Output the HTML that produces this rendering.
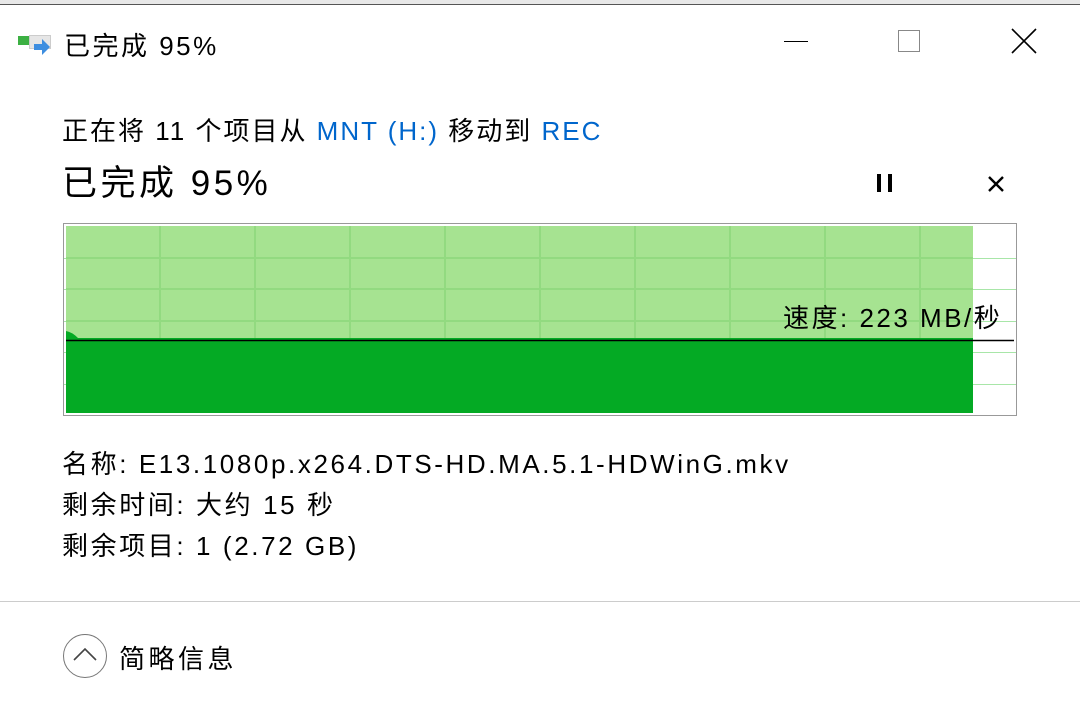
<!DOCTYPE html>
<html><head><meta charset="utf-8"><style>
body{margin:0;width:1080px;height:705px;background:#fff;position:relative;overflow:hidden;font-family:"Liberation Sans","Noto Sans CJK SC",sans-serif;color:#000}
.a{position:absolute;white-space:nowrap}
.blue{color:#0066cc}
</style></head><body>
<div class="a" style="left:0;top:0;width:1080px;height:4px;background:#e8e8e8;border-bottom:1px solid #555"></div>
<div class="a" style="left:18px;top:36px;width:11px;height:9px;background:#3cb043"></div>
<div class="a" style="left:29px;top:35px;width:20px;height:12px;background:#e6e6e6;border:1px solid #ccc"></div>
<svg class="a" style="left:34px;top:38px" width="18" height="20"><path d="M0 6h8V1l8 8-8 8v-5H0z" fill="#3d8ee0"/></svg>
<div class="a" style="left:64px;top:26px;font-size:26px;letter-spacing:2.5px">已完成 95%</div>
<div class="a" style="left:784px;top:41px;width:24px;height:1px;background:#000"></div>
<div class="a" style="left:898px;top:30px;width:20px;height:20px;border:1px solid #888"></div>
<svg class="a" style="left:1011px;top:28px" width="26" height="26"><path d="M1 1L25 25M25 1L1 25" stroke="#000" stroke-width="1.6"/></svg>
<div class="a" style="left:62px;top:111px;font-size:26px;letter-spacing:2px">正在将 11 个项目从 <span class="blue">MNT (H:)</span> 移动到 <span class="blue">REC</span></div>
<div class="a" style="left:62px;top:155px;font-size:35px;letter-spacing:3.5px">已完成 95%</div>
<div class="a" style="left:877px;top:174px;width:4px;height:18px;background:#000"></div>
<div class="a" style="left:888px;top:174px;width:4px;height:18px;background:#000"></div>
<svg class="a" style="left:987px;top:175px" width="18" height="18"><path d="M2 2L16 16M16 2L2 16" stroke="#000" stroke-width="2.4"/></svg>
<div class="a" style="left:63px;top:223px;width:952px;height:191px;border:1px solid #999;background:#fff"></div>
<svg class="a" style="left:64px;top:224px" width="952" height="191">
<g stroke="#a8e6a8" stroke-width="1">
<line x1="0" y1="34.5" x2="952" y2="34.5"/><line x1="0" y1="65.5" x2="952" y2="65.5"/><line x1="0" y1="97.5" x2="952" y2="97.5"/><line x1="0" y1="128.5" x2="952" y2="128.5"/><line x1="0" y1="160.5" x2="952" y2="160.5"/>
</g>
<rect x="2" y="2" width="907" height="187" fill="#a6e391"/>
<g stroke="#92da80" stroke-width="2">
<line x1="2" y1="34" x2="909" y2="34"/><line x1="2" y1="65" x2="909" y2="65"/><line x1="2" y1="97" x2="909" y2="97"/>
<line x1="96" y1="2" x2="96" y2="116"/><line x1="191" y1="2" x2="191" y2="116"/><line x1="286" y1="2" x2="286" y2="116"/><line x1="381" y1="2" x2="381" y2="116"/><line x1="476" y1="2" x2="476" y2="116"/><line x1="571" y1="2" x2="571" y2="116"/><line x1="666" y1="2" x2="666" y2="116"/><line x1="761" y1="2" x2="761" y2="116"/><line x1="856" y1="2" x2="856" y2="116"/>
</g>
<path d="M2 107Q8 108 14 114L909 114V189H2Z" fill="#04aa24"/>
<line x1="2" y1="116.5" x2="950" y2="116.5" stroke="#000" stroke-width="1.5"/>
</svg>
<div class="a" style="left:783px;top:298px;font-size:26px;letter-spacing:2.5px">速度: 223 MB/秒</div>
<div class="a" style="left:62px;top:444px;font-size:26px;letter-spacing:2.6px;line-height:41px">名称: E13.1080p.x264.DTS-HD.MA.5.1-HDWinG.mkv<br>剩余时间: 大约 15 秒<br>剩余项目: 1 (2.72 GB)</div>
<div class="a" style="left:0;top:601px;width:1080px;height:1px;background:#ccc"></div>
<div class="a" style="left:63px;top:634px;width:42px;height:42px;border:1px solid #777;border-radius:50%"></div>
<svg class="a" style="left:72px;top:645px" width="26" height="18"><path d="M2 15L13 4L24 15" stroke="#444" stroke-width="1.6" fill="none"/></svg>
<div class="a" style="left:119px;top:639px;font-size:26px;letter-spacing:3.5px">简略信息</div>
</body></html>
